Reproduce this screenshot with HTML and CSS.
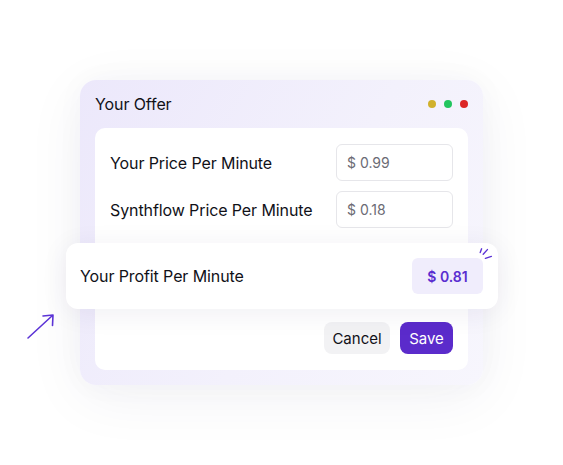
FILE: index.html
```html
<!DOCTYPE html>
<html>
<head>
<meta charset="utf-8">
<link rel="stylesheet" href="styles.css">
</head>
<body>
<div class="stage">
  <div class="window">
    <div class="window-head">
      <span class="window-title">Your Offer</span>
      <div class="dots">
        <span class="dot dot-yellow"></span>
        <span class="dot dot-green"></span>
        <span class="dot dot-red"></span>
      </div>
    </div>
    <div class="panel">
      <div class="field-row">
        <span class="field-label">Your Price Per Minute</span>
        <div class="field-input">$ 0.99</div>
      </div>
      <div class="field-row">
        <span class="field-label">Synthflow Price Per Minute</span>
        <div class="field-input">$ 0.18</div>
      </div>
      <div class="profit-card">
        <span class="profit-label">Your Profit Per Minute</span>
        <div class="profit-value">$ 0.81</div>
        <svg class="sparkle" width="16" height="14" viewBox="0 0 16 14">
          <path d="M1.2 5.5 L2.6 1.8 M4.2 7.2 L8.4 2.6 M6.4 11.3 L12.4 9.4" stroke="#5b33d6" stroke-width="1.4" stroke-linecap="round" fill="none"/>
        </svg>
        <svg class="arrow" width="34" height="32" viewBox="0 0 34 32">
          <path d="M3 28 L28 5 M18 6 L28 5 L27.5 15.5" stroke="#5b33d6" stroke-width="1.6" stroke-linecap="round" stroke-linejoin="round" fill="none"/>
        </svg>
      </div>
      <div class="actions">
        <button class="btn btn-cancel">Cancel</button>
        <button class="btn btn-save">Save</button>
      </div>
    </div>
  </div>
</div>
</body>
</html>
```
FILE: styles.css
```css
* { box-sizing: border-box; }
html, body {
  margin: 0;
  padding: 0;
  background: #ffffff;
  font-family: Inter, "Noto Sans", sans-serif;
  color: #111118;
}
.stage {
  padding: 80px 80px 0 80px;
  width: 563px;
  height: 465px;
  overflow: hidden;
}
.window {
  width: 403px;
  height: 305px;
  border-radius: 16px;
  background: linear-gradient(120deg, #ece8fb 0%, #f3f1fc 55%, #f7f6fd 100%);
  box-shadow: 0 12px 60px rgba(40, 30, 80, 0.06), 0 0 30px rgba(40, 30, 80, 0.03);
  padding: 0 15px 15px 15px;
  display: flex;
  flex-direction: column;
}
.window-head {
  height: 48px;
  display: flex;
  align-items: center;
  justify-content: space-between;
}
.window-title {
  font-size: 16px;
  font-weight: 400;
  letter-spacing: -0.1px;
}
.dots {
  display: flex;
  gap: 8px;
  align-items: center;
}
.dot {
  width: 8px;
  height: 8px;
  border-radius: 50%;
}
.dot-yellow { background: #d1b12c; }
.dot-green { background: #22c55e; }
.dot-red { background: #dc2626; }
.panel {
  flex: 1;
  background: #ffffff;
  border-radius: 10px;
  padding: 16px 15px 16px 15px;
  display: flex;
  flex-direction: column;
}
.field-row {
  display: flex;
  align-items: center;
  justify-content: space-between;
  height: 37px;
}
.field-row + .field-row { margin-top: 10px; }
.field-label {
  font-size: 16px;
  letter-spacing: -0.1px;
}
.field-input {
  width: 117px;
  height: 37px;
  border: 1px solid #e6e6ea;
  border-radius: 6px;
  display: flex;
  align-items: center;
  padding-left: 10px;
  font-size: 14px;
  color: #6b6b74;
}
.profit-card {
  position: relative;
  margin: 15px -45px 0 -44px;
  height: 66px;
  background: #ffffff;
  border-radius: 12px;
  box-shadow: 0 4px 28px rgba(40, 30, 80, 0.07);
  display: flex;
  align-items: center;
  justify-content: space-between;
  padding: 0 15px 0 14px;
}
.profit-label {
  font-size: 16px;
  letter-spacing: -0.1px;
}
.profit-value {
  width: 71px;
  height: 36px;
  border-radius: 6px;
  background: #f0edfc;
  color: #5a2ed0;
  font-weight: 600;
  font-size: 14px;
  display: flex;
  align-items: center;
  justify-content: center;
}
.sparkle {
  position: absolute;
  left: 413px;
  top: 4px;
}
.arrow {
  position: absolute;
  left: -41px;
  top: 67px;
}
.actions {
  margin-top: 13px;
  display: flex;
  justify-content: flex-end;
  gap: 10px;
}
.btn {
  font-family: Inter, "Noto Sans", sans-serif;
  font-size: 15px;
  height: 32px;
  border: none;
  border-radius: 8px;
  padding: 0;
  cursor: pointer;
}
.btn-cancel {
  width: 66px;
  background: #f2f2f4;
  color: #111118;
}
.btn-save {
  width: 53px;
  background: #5b2bcb;
  color: #ffffff;
}
```
